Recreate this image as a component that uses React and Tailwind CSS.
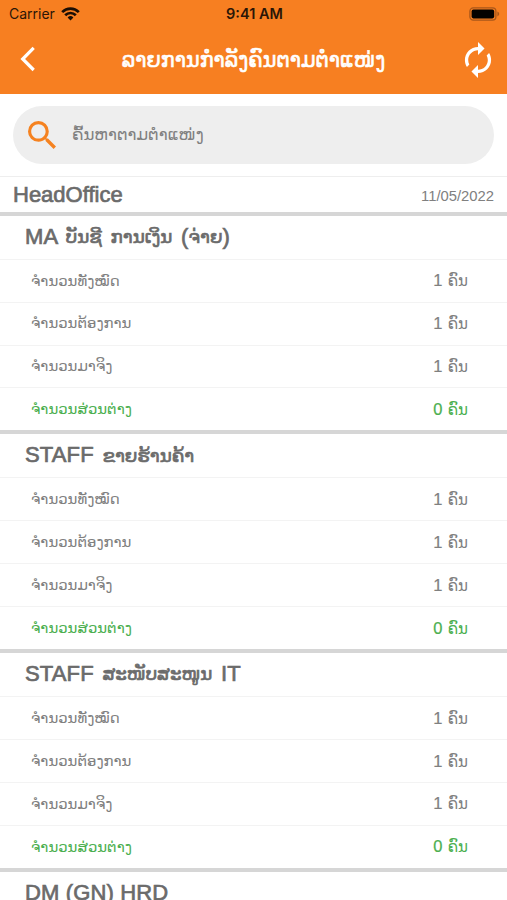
import React from "react";

const LABELS = ["ຈຳນວນທັງໝົດ", "ຈຳນວນຕ້ອງການ", "ຈຳນວນມາຈິງ", "ຈຳນວນສ່ວນຕ່າງ"];

const positions = [
  { title: [{ text: "MA " }, { text: "ບັນຊີ ການເງິນ", lao: true }, { text: " (" }, { text: "ຈ່າຍ", lao: true }, { text: ")" }], counts: [1, 1, 1, 0] },
  { title: [{ text: "STAFF " }, { text: "ຂາຍຮ້ານຄ້າ", lao: true }], counts: [1, 1, 1, 0] },
  { title: [{ text: "STAFF " }, { text: "ສະໜັບສະໜູນ", lao: true }, { text: " IT" }], counts: [1, 1, 1, 0] },
  { title: [{ text: "DM (GN) HRD" }], counts: [] },
];

function StatusBar() {
  return (
    <div className="grid h-[27px] grid-cols-3 items-center pl-[9px] pr-[7px] text-[#2b1607]">
      <div className="flex items-center gap-[6px] font-['Inter',sans-serif] text-[14px]">
        <span>Carrier</span>
        <svg width="19" height="14" viewBox="0 0 19 14" fill="none" stroke="#1c0e04" strokeWidth="2.7">
          <path d="M1.2 5.1a11.8 11.8 0 0 1 16.6 0" />
          <path d="M4.2 8.2a7.5 7.5 0 0 1 10.6 0" />
          <path d="M9.5 13.4 6.6 10.5a4.1 4.1 0 0 1 5.8 0z" fill="#1c0e04" stroke="none" />
        </svg>
      </div>
      <div className="text-center font-['Inter',sans-serif] text-[14.5px] font-semibold">9:41 AM</div>
      <svg className="justify-self-end" width="31" height="14" viewBox="0 0 31 14">
        <rect x="0.9" y="0.9" width="26" height="12.2" rx="3.4" fill="none" stroke="#a9571a" strokeWidth="1.3" />
        <rect x="2.6" y="2.6" width="22.6" height="8.8" rx="1.8" fill="#050200" />
        <path d="M28.4 4.6c2.4 1 2.4 3.8 0 4.8z" fill="#a9571a" />
      </svg>
    </div>
  );
}

function NavBar() {
  return (
    <div className="flex h-[67px] items-center justify-between pl-5 pr-[13px]">
      <svg className="mt-[-3px]" width="16" height="26" viewBox="0 0 16 26" fill="none" stroke="#fff" strokeWidth="3.2">
        <path d="M13.7 1.9 2.7 13l11 11" />
      </svg>
      <h1 className="whitespace-nowrap pl-[9px] font-['DejaVu_Sans',sans-serif] text-[20.8px] text-white [-webkit-text-stroke:0.6px_white]">
        ລາຍການກຳລັງຄົນຕາມຕຳແໜ່ງ
      </h1>
      <svg className="mt-[-2px]" width="32" height="36" viewBox="2.5 1 19 22" fill="#fff">
        <path d="M12 6v3l4-4-4-4v3c-4.42 0-8 3.58-8 8 0 1.57.46 3.03 1.24 4.26L6.7 14.8c-.45-.83-.7-1.79-.7-2.8 0-3.31 2.69-6 6-6zm6.76 1.74L17.3 9.2c.44.84.7 1.79.7 2.8 0 3.31-2.69 6-6 6v-3l-4 4 4 4v-3c4.42 0 8-3.58 8-8 0-1.57-.46-3.03-1.24-4.26z" />
      </svg>
    </div>
  );
}

function SearchBox() {
  return (
    <div className="h-[83px] border-b border-[#eee] px-[13px] pt-3">
      <div className="flex h-[58px] w-full items-center rounded-full bg-[#eee] pl-[15px]">
        <svg width="28" height="28" viewBox="3 3 17.5 17.5" fill="#f58220">
          <path d="M15.5 14h-.79l-.28-.27A6.471 6.471 0 0 0 16 9.5 6.5 6.5 0 1 0 9.5 16c1.61 0 3.09-.59 4.23-1.57l.27.28v.79l5 4.99L20.49 19l-4.99-5zm-6 0C7.01 14 5 11.99 5 9.5S7.01 5 9.5 5 14 7.01 14 9.5 11.99 14 9.5 14z" />
        </svg>
        <span className="ml-4 font-['DejaVu_Sans',sans-serif] text-[16.6px] text-[#808080]">ຄົ້ນຫາຕາມຕຳແໜ່ງ</span>
      </div>
    </div>
  );
}

function Position({ title, counts }) {
  return (
    <section>
      <h2
        className={`flex h-[43.1px] items-center whitespace-pre pb-[2px] pl-[25px] font-['Liberation_Sans',sans-serif] text-[22px] tracking-[0.15px] text-[#6b6b6b] [-webkit-text-stroke:0.7px_#6b6b6b] ${
          title.length > 1 ? "[word-spacing:2.4px]" : ""
        }`}
      >
        {title.map((part, i) => (
          <span
            key={i}
            className={part.lao ? "pt-px font-['DejaVu_Sans',sans-serif] text-[18.3px] tracking-normal [word-spacing:3px]" : ""}
          >
            {part.text}
          </span>
        ))}
      </h2>
      {counts.map((count, i) => (
        <div
          key={i}
          className={`flex h-[42.9px] items-center justify-between border-t border-t-[#f3f3f3] pl-[31px] pr-[39px] ${
            i === 3 ? "text-[#4caf50]" : "text-[#808080]"
          }`}
        >
          <span className="font-['DejaVu_Sans',sans-serif] text-[14.9px]">{LABELS[i]}</span>
          <span className="whitespace-pre font-['Liberation_Sans',sans-serif] text-[16.5px] [word-spacing:0.8px] [-webkit-text-stroke:0.2px_currentColor]">
            {count} <span className="font-['DejaVu_Sans',sans-serif] text-[15px] [-webkit-text-stroke:0]">ຄົນ</span>
          </span>
        </div>
      ))}
      {counts.length > 0 && <div className="h-1 bg-[#d6d6d6]" />}
    </section>
  );
}

export default function App() {
  return (
    <div className="h-[900px] w-full overflow-hidden bg-white">
      <header className="h-[94px] bg-[#f77f21]">
        <StatusBar />
        <NavBar />
      </header>
      <SearchBox />
      <div className="flex h-[38.7px] items-center justify-between border-b-4 border-[#d6d6d6] px-[13px] font-['Liberation_Sans',sans-serif]">
        <span className="pt-px text-[22px] text-[#6b6b6b] [-webkit-text-stroke:0.7px_#6b6b6b]">HeadOffice</span>
        <span className="pt-1 text-[14.8px] text-[#808080]">11/05/2022</span>
      </div>
      {positions.map((p, i) => (
        <Position key={i} title={p.title} counts={p.counts} />
      ))}
    </div>
  );
}
